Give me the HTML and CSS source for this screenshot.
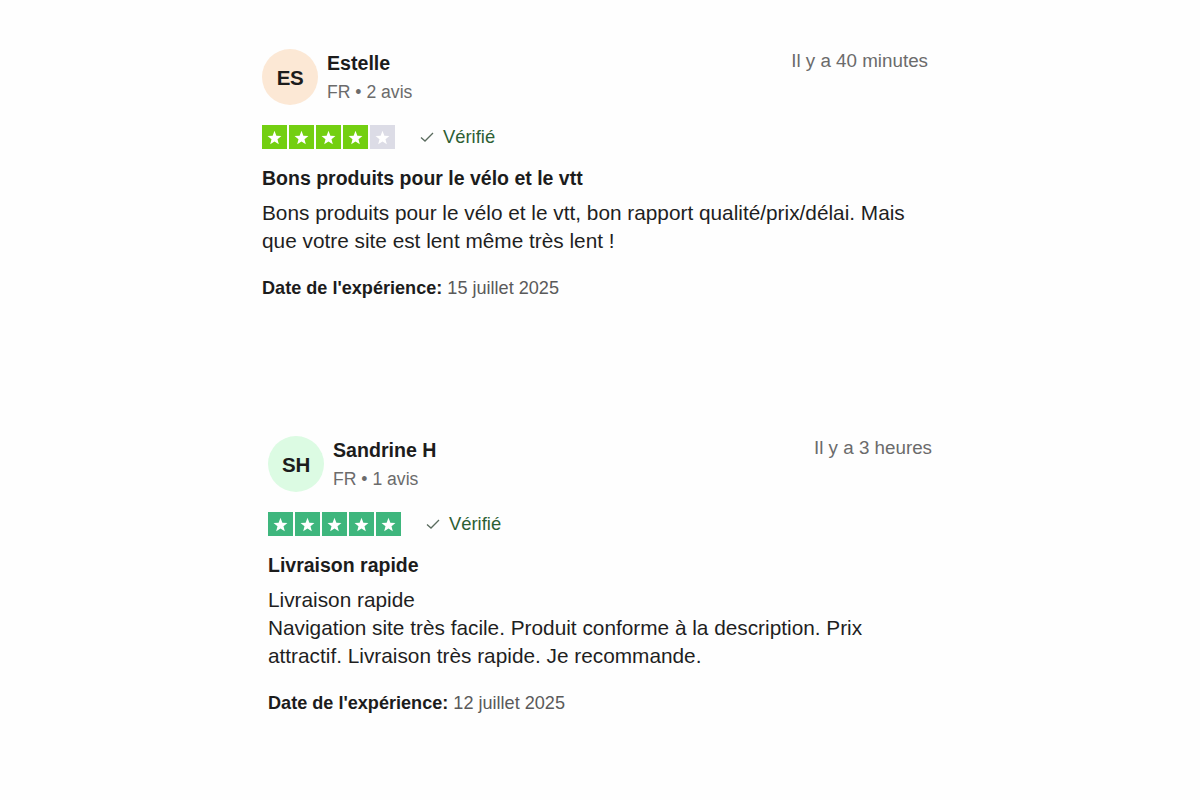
FILE: index.html
```html
<!DOCTYPE html>
<html lang="fr">
<head>
<meta charset="utf-8">
<link rel="stylesheet" href="styles.css">
</head>
<body>
<main class="page">
  <article class="review review-1">
    <header class="review-head">
      <div class="avatar avatar-peach">ES</div>
      <div class="who">
        <div class="name">Estelle</div>
        <div class="meta">FR • 2 avis</div>
      </div>
      <time class="ago">Il y a 40 minutes</time>
    </header>
    <div class="rating-row">
      <div class="stars stars-4">
        <span class="star on"><svg viewBox="0 0 24 24"><path d="M12 3.6l2.35 6.05 6.45.35-5 4.1 1.65 6.3L12 16.9l-5.45 3.5 1.65-6.3-5-4.1 6.45-.35z"/></svg></span>
        <span class="star on"><svg viewBox="0 0 24 24"><path d="M12 3.6l2.35 6.05 6.45.35-5 4.1 1.65 6.3L12 16.9l-5.45 3.5 1.65-6.3-5-4.1 6.45-.35z"/></svg></span>
        <span class="star on"><svg viewBox="0 0 24 24"><path d="M12 3.6l2.35 6.05 6.45.35-5 4.1 1.65 6.3L12 16.9l-5.45 3.5 1.65-6.3-5-4.1 6.45-.35z"/></svg></span>
        <span class="star on"><svg viewBox="0 0 24 24"><path d="M12 3.6l2.35 6.05 6.45.35-5 4.1 1.65 6.3L12 16.9l-5.45 3.5 1.65-6.3-5-4.1 6.45-.35z"/></svg></span>
        <span class="star off"><svg viewBox="0 0 24 24"><path d="M12 3.6l2.35 6.05 6.45.35-5 4.1 1.65 6.3L12 16.9l-5.45 3.5 1.65-6.3-5-4.1 6.45-.35z"/></svg></span>
      </div>
      <span class="verified"><svg class="check" viewBox="0 0 16 16"><path d="M2 8.5l4 3.5 8-8"/></svg>Vérifié</span>
    </div>
    <h2 class="title">Bons produits pour le vélo et le vtt</h2>
    <p class="text">Bons produits pour le vélo et le vtt, bon rapport qualité/prix/délai. Mais que votre site est lent même très lent !</p>
    <p class="date"><b>Date de l'expérience:</b> 15 juillet 2025</p>
  </article>

  <article class="review review-2">
    <header class="review-head">
      <div class="avatar avatar-mint">SH</div>
      <div class="who">
        <div class="name">Sandrine H</div>
        <div class="meta">FR • 1 avis</div>
      </div>
      <time class="ago">Il y a 3 heures</time>
    </header>
    <div class="rating-row">
      <div class="stars stars-5">
        <span class="star on"><svg viewBox="0 0 24 24"><path d="M12 3.6l2.35 6.05 6.45.35-5 4.1 1.65 6.3L12 16.9l-5.45 3.5 1.65-6.3-5-4.1 6.45-.35z"/></svg></span>
        <span class="star on"><svg viewBox="0 0 24 24"><path d="M12 3.6l2.35 6.05 6.45.35-5 4.1 1.65 6.3L12 16.9l-5.45 3.5 1.65-6.3-5-4.1 6.45-.35z"/></svg></span>
        <span class="star on"><svg viewBox="0 0 24 24"><path d="M12 3.6l2.35 6.05 6.45.35-5 4.1 1.65 6.3L12 16.9l-5.45 3.5 1.65-6.3-5-4.1 6.45-.35z"/></svg></span>
        <span class="star on"><svg viewBox="0 0 24 24"><path d="M12 3.6l2.35 6.05 6.45.35-5 4.1 1.65 6.3L12 16.9l-5.45 3.5 1.65-6.3-5-4.1 6.45-.35z"/></svg></span>
        <span class="star on"><svg viewBox="0 0 24 24"><path d="M12 3.6l2.35 6.05 6.45.35-5 4.1 1.65 6.3L12 16.9l-5.45 3.5 1.65-6.3-5-4.1 6.45-.35z"/></svg></span>
      </div>
      <span class="verified"><svg class="check" viewBox="0 0 16 16"><path d="M2 8.5l4 3.5 8-8"/></svg>Vérifié</span>
    </div>
    <h2 class="title">Livraison rapide</h2>
    <p class="text">Livraison rapide<br>Navigation site très facile. Produit conforme à la description. Prix attractif. Livraison très rapide. Je recommande.</p>
    <p class="date"><b>Date de l'expérience:</b> 12 juillet 2025</p>
  </article>
</main>
</body>
</html>
```

FILE: styles.css
```css
html, body {
  margin: 0;
  padding: 0;
  background: #fefefe;
}

body {
  font-family: "Liberation Sans", Arial, sans-serif;
  color: #1c1c1c;
}

.page {
  display: flex;
  flex-direction: column;
  padding-top: 49px;
}

.review-1 {
  margin-left: 262px;
  width: 666px;
}

.review-2 {
  margin-left: 268px;
  width: 664px;
  margin-top: 137px;
}

.review-head {
  display: flex;
  align-items: flex-start;
}

.avatar {
  width: 56px;
  height: 56px;
  border-radius: 50%;
  display: flex;
  align-items: center;
  justify-content: center;
  font-weight: 700;
  font-size: 20.5px;
  color: #1c1c1c;
  flex-shrink: 0;
  letter-spacing: -0.3px;
  padding-top: 1px;
  box-sizing: border-box;
}

.avatar-peach { background: #fce8d5; }
.avatar-mint { background: #dcfbe3; }

.who {
  margin-left: 9px;
  flex: 1;
  padding-top: 2px;
}

.name {
  font-weight: 700;
  font-size: 19.6px;
  line-height: 24px;
}

.meta {
  font-size: 17.6px;
  line-height: 24px;
  margin-top: 5px;
  color: #6b6b6b;
}

.ago {
  font-size: 18.8px;
  line-height: 24px;
  color: #6b6b6b;
}

.rating-row {
  display: flex;
  align-items: center;
  margin-top: 20px;
  height: 24px;
}

.stars {
  display: flex;
  gap: 2px;
}

.star {
  width: 25px;
  height: 24px;
  display: flex;
  align-items: center;
  justify-content: center;
}

.star svg {
  width: 19px;
  height: 19px;
  fill: #ffffff;
}

.stars-4 .on { background: #73cf11; }
.stars-4 .off { background: #dcdce6; }
.stars-5 .on { background: #3eb67d; }

.verified {
  display: flex;
  align-items: center;
  margin-left: 24px;
  font-size: 18.4px;
  color: #2c5f33;
}

.check {
  width: 16px;
  height: 16px;
  margin-right: 8px;
  fill: none;
  stroke: #5a6b5e;
  stroke-width: 1.3;
}

.title {
  font-size: 19.5px;
  line-height: 24px;
  font-weight: 700;
  margin: 17px 0 0;
}

.text {
  font-size: 20.8px;
  line-height: 28px;
  margin: 9px 0 0;
  color: #1f1f1f;
}

.date {
  font-size: 18.1px;
  line-height: 22px;
  margin: 22px 0 0;
  color: #5a5a5a;
}

.date b {
  color: #1c1c1c;
}
```
